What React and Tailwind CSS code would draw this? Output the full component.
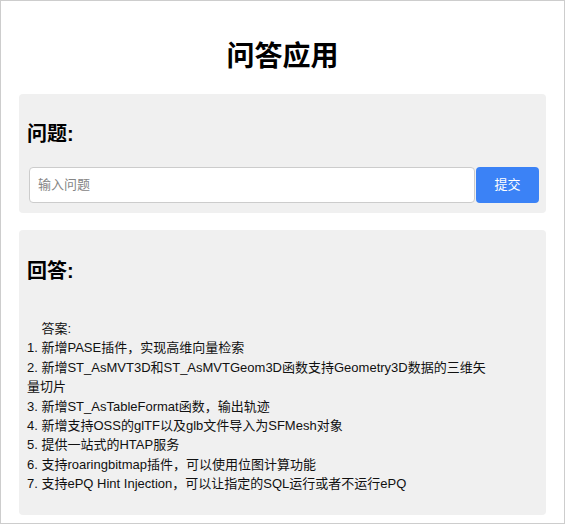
import { useState } from 'react'

const ANSWER = `    答案:
1. 新增PASE插件，实现高维向量检索
2. 新增ST_AsMVT3D和ST_AsMVTGeom3D函数支持Geometry3D数据的三维矢量切片
3. 新增ST_AsTableFormat函数，输出轨迹
4. 新增支持OSS的glTF以及glb文件导入为SFMesh对象
5. 提供一站式的HTAP服务
6. 支持roaringbitmap插件，可以使用位图计算功能
7. 支持ePQ Hint Injection，可以让指定的SQL运行或者不运行ePQ`

export default function App() {
  const [question, setQuestion] = useState('')

  return (
    <div className="w-[565px] h-[524px] border border-[#cdcdcd] bg-white px-[18px] pt-[36px] text-black font-['Liberation_Sans','Noto_Sans_CJK_SC',sans-serif]">
      {/* Title */}
      <h1 className="text-center text-[28px] font-bold leading-[40px]">问答应用</h1>

      {/* Question */}
      <div className="mt-[17px] bg-[#f0f0f0] rounded-[4px] pt-[10px] pl-[8px] pr-[7px] pb-[10px]">
        <h2 className="text-[20px] font-bold leading-[32px] mt-[14px] mb-[17px]">问题:</h2>
        <div className="flex h-[36px] gap-px pl-[2px]">
          <input
            type="text"
            value={question}
            onChange={(e) => setQuestion(e.target.value)}
            placeholder="输入问题"
            className="flex-1 min-w-0 bg-white border border-[#cccccc] rounded-[4px] px-[8px] text-[13px] placeholder-[#858585] outline-none"
          />
          <button className="w-[63px] bg-[#3b82f6] text-white text-[13px] rounded-[4px]">
            提交
          </button>
        </div>
      </div>

      {/* Answer */}
      <div className="mt-[17px] h-[285px] bg-[#f0f0f0] rounded-[4px] pt-[10px] pl-[8px] pr-[7px]">
        <h2 className="text-[20px] font-bold leading-[32px] mt-[15px]">回答:</h2>
        <div className="mt-[32px] max-w-[466px] whitespace-pre-wrap text-[13px] leading-[19.4px] text-[#111]">
          {ANSWER}
        </div>
      </div>
    </div>
  )
}
